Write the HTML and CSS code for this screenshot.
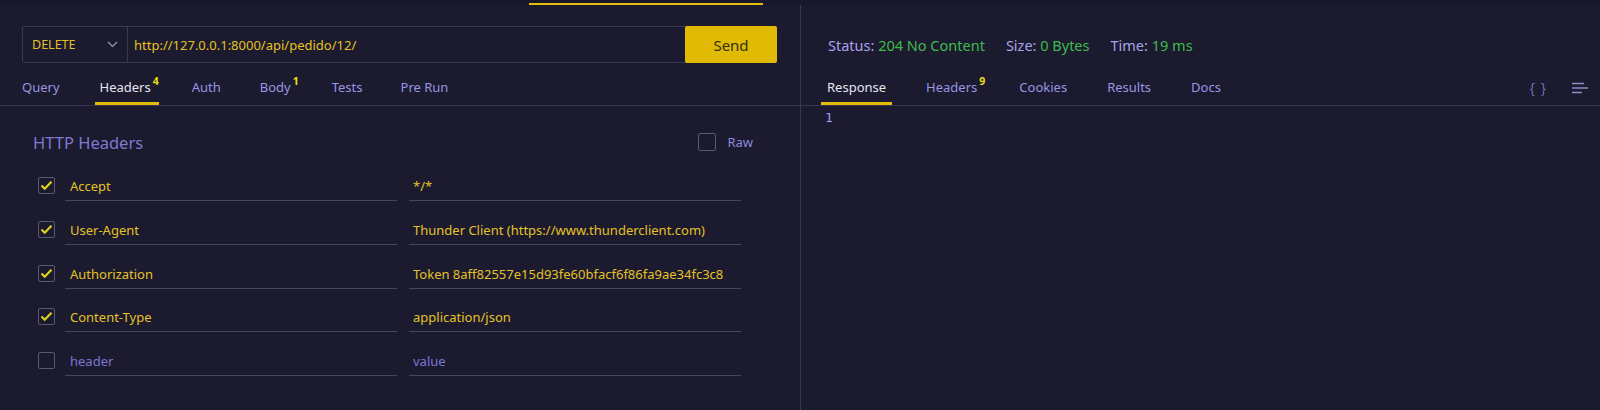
FILE: index.html
```html
<!DOCTYPE html>
<html>
<head>
<meta charset="utf-8">
<link rel="stylesheet" href="styles.css">
</head>
<body>
<div class="top"><div class="top-ind"></div></div>
<div class="main">
  <section class="left">
    <div class="req">
      <div class="urlbar">
        <div class="method">
          <span>DELETE</span>
          <svg class="chev" width="11" height="7" viewBox="0 0 11 7"><path d="M1 1l4.5 4.5L10 1" fill="none" stroke="#9c9ab6" stroke-width="1.2"/></svg>
        </div>
        <div class="url">http://127.0.0.1:8000/api/pedido/12/</div>
        <button class="send">Send</button>
      </div>
    </div>
    <nav class="tabs ltabs">
      <span class="tab">Query</span>
      <span class="tab active has-badge">Headers<sup class="badge">4</sup></span>
      <span class="tab">Auth</span>
      <span class="tab has-badge">Body<sup class="badge">1</sup></span>
      <span class="tab">Tests</span>
      <span class="tab">Pre Run</span>
    </nav>
    <div class="hdrs">
      <div class="hdrs-title">
        <h2>HTTP Headers</h2>
        <label class="raw"><span class="cb"></span><span>Raw</span></label>
      </div>
      <div class="rows">
        <div class="row">
          <span class="cb on"><svg width="15" height="15" viewBox="0 0 15 15"><path d="M2.5 7.5l3.2 3.2L12.5 3.8" fill="none" stroke="#dcd21c" stroke-width="2.2"/></svg></span>
          <div class="field">Accept</div>
          <div class="field">*/*</div>
        </div>
        <div class="row">
          <span class="cb on"><svg width="15" height="15" viewBox="0 0 15 15"><path d="M2.5 7.5l3.2 3.2L12.5 3.8" fill="none" stroke="#dcd21c" stroke-width="2.2"/></svg></span>
          <div class="field">User-Agent</div>
          <div class="field">Thunder Client (https://www.thunderclient.com)</div>
        </div>
        <div class="row">
          <span class="cb on"><svg width="15" height="15" viewBox="0 0 15 15"><path d="M2.5 7.5l3.2 3.2L12.5 3.8" fill="none" stroke="#dcd21c" stroke-width="2.2"/></svg></span>
          <div class="field">Authorization</div>
          <div class="field">Token 8aff82557e15d93fe60bfacf6f86fa9ae34fc3c8</div>
        </div>
        <div class="row">
          <span class="cb on"><svg width="15" height="15" viewBox="0 0 15 15"><path d="M2.5 7.5l3.2 3.2L12.5 3.8" fill="none" stroke="#dcd21c" stroke-width="2.2"/></svg></span>
          <div class="field">Content-Type</div>
          <div class="field">application/json</div>
        </div>
        <div class="row">
          <span class="cb"></span>
          <div class="field ph">header</div>
          <div class="field ph">value</div>
        </div>
      </div>
    </div>
  </section>
  <section class="right">
    <div class="status">
      <span class="stat"><span class="lbl">Status:</span> <span class="val">204 No Content</span></span>
      <span class="stat"><span class="lbl">Size:</span> <span class="val">0 Bytes</span></span>
      <span class="stat"><span class="lbl">Time:</span> <span class="val">19 ms</span></span>
    </div>
    <nav class="tabs rtabs">
      <span class="tab active">Response</span>
      <span class="tab has-badge">Headers<sup class="badge">9</sup></span>
      <span class="tab">Cookies</span>
      <span class="tab">Results</span>
      <span class="tab">Docs</span>
      <div class="tools">
        <span class="braces">{ }</span>
        <svg class="lines" width="16" height="12" viewBox="0 0 16 12"><path d="M0 1.5h12M0 6h16M0 10.5h10" stroke="#8f8cc4" stroke-width="1.3"/></svg>
      </div>
    </nav>
    <div class="resp"><span class="ln">1</span></div>
  </section>
</div>
</body>
</html>
```
FILE: styles.css
```css
* { box-sizing: border-box; }
html, body { margin: 0; padding: 0; }
body {
  width: 1600px;
  height: 410px;
  overflow: hidden;
  background: #1b1a2e;
  font-family: "Noto Sans", "Open Sans", sans-serif;
  font-size: 13px;
  color: #9d99e6;
}
.top {
  height: 5px;
  display: flex;
  background: #18172a;
}
.top-ind {
  margin-left: 529px;
  margin-top: 3px;
  width: 234px;
  height: 2px;
  background: #e3bd0c;
}
.main {
  display: flex;
  height: 405px;
}
.left {
  width: 801px;
  border-right: 1px solid #383750;
  flex: none;
}
.right {
  flex: 1;
  display: flex;
  flex-direction: column;
}
.req {
  padding: 21px 23px 0 22px;
}
.urlbar {
  display: flex;
  height: 37px;
  border: 1px solid #3a3952;
  border-radius: 2px;
}
.method {
  width: 105px;
  display: flex;
  align-items: center;
  justify-content: space-between;
  padding: 0 9px 0 9px;
  border-right: 1px solid #3a3952;
  color: #e4c01e;
  font-size: 12.5px;
}
.url {
  flex: 1;
  display: flex;
  align-items: center;
  padding-left: 6px;
  color: #e6c21f;
  font-size: 13px;
}
.send {
  width: 92px;
  margin: -1px -1px -1px 0;
  border: none;
  border-radius: 2px;
  background: #e0ba03;
  color: #342e16;
  font-family: "Noto Sans", sans-serif;
  font-size: 15px;
  padding: 0;
}
.tabs {
  display: flex;
  height: 43px;
  padding-left: 17px;
  border-bottom: 1px solid #36354c;
}
.tab {
  display: flex;
  align-items: center;
  padding: 8px 5px 0 5px;
  min-width: 40px;
  margin-right: 28px;
  border-bottom: 3px solid transparent;
  color: #9a95e4;
  white-space: nowrap;
}
.ltabs .tab:first-child { margin-right: 30px; }
.tab.has-badge { padding-right: 0; }
.tab.active {
  color: #e6e5f2;
  border-bottom-color: #e2bd0c;
}
.badge {
  margin-bottom: 11px;
  margin-left: 2px;
  font-size: 10.5px;
  font-weight: 700;
  color: #f0de10;
  line-height: 1;
}
.hdrs {
  padding: 24px 47px 0 33px;
}
.hdrs-title {
  display: flex;
  justify-content: space-between;
  align-items: center;
  height: 24px;
}
.hdrs-title h2 {
  margin: 0;
  font-weight: 400;
  font-size: 16.5px;
  color: #7f79d2;
}
.raw {
  display: flex;
  align-items: center;
  gap: 11px;
  color: #8e89dc;
  font-size: 13px;
}
.cb {
  width: 18px;
  height: 18px;
  border: 1px solid #5a5972;
  border-radius: 2px;
  display: flex;
  align-items: center;
  justify-content: center;
  flex: none;
}
.rows {
  margin-top: 18px;
  margin-left: 5px;
  display: flex;
  flex-direction: column;
  gap: 14.75px;
}
.row {
  display: flex;
  align-items: center;
  gap: 10px;
}
.row .cb {
  width: 17px;
  height: 17px;
  margin-top: -2px;
}
.field {
  width: 332px;
  height: 29px;
  display: flex;
  align-items: center;
  padding-left: 5px;
  border-bottom: 1px solid #47465e;
  color: #e5c226;
  white-space: nowrap;
}
.field + .field {
  margin-left: 2px;
  padding-left: 4px;
}
.field.ph { color: #7b76d4; }
.status {
  display: flex;
  align-items: center;
  gap: 21px;
  height: 58px;
  padding: 22px 0 0 27px;
  font-size: 14.5px;
}
.lbl { color: #a7a3ea; }
.val { color: #3fba4c; }
.rtabs {
  padding-left: 20px;
  padding-right: 12px;
}
.rtabs .tab { padding: 8px 6px 0 6px; }
.rtabs .tab.has-badge { padding-right: 0; }
.tools {
  margin-left: auto;
  display: flex;
  align-items: center;
  gap: 25px;
  padding-top: 8px;
}
.braces {
  color: #8c88e2;
  font-size: 14.5px;
  font-weight: 300;
  letter-spacing: 1px;
}
.resp {
  padding: 2px 0 0 24px;
}
.ln {
  font-family: "DejaVu Sans Mono", monospace;
  font-size: 13px;
  color: #a19ceb;
}
```
